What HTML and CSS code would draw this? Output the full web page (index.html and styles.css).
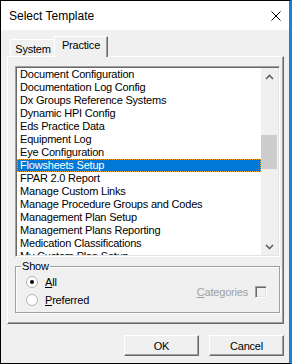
FILE: index.html
```html
<!DOCTYPE html>
<html lang="en">
<head>
  <meta charset="UTF-8" />
  <title>Select Template</title>
  <link rel="stylesheet" href="styles.css">
</head>
<body>
  <div class="window">
    <div class="titlebar">
      <span class="title">Select Template</span>
      <svg class="close" width="10" height="10" viewBox="0 0 10 10">
        <path d="M0.5 0.5 L9.5 9.5 M9.5 0.5 L0.5 9.5" stroke="#000" stroke-width="1" fill="none"/>
      </svg>
    </div>

    <div class="client">
      <div class="tabs">
        <div class="tab">System</div>
        <div class="tab active">Practice</div>
      </div>

      <div class="panel">
        <div class="listbox">
          <ul class="items">
            <li>Document Configuration</li>
            <li>Documentation Log Config</li>
            <li>Dx Groups Reference Systems</li>
            <li>Dynamic HPI Config</li>
            <li>Eds Practice Data</li>
            <li>Equipment Log</li>
            <li>Eye Configuration</li>
            <li class="selected">Flowsheets Setup</li>
            <li>FPAR 2.0 Report</li>
            <li>Manage Custom Links</li>
            <li>Manage Procedure Groups and Codes</li>
            <li>Management Plan Setup</li>
            <li>Management Plans Reporting</li>
            <li>Medication Classifications</li>
            <li>My Custom Plan Setup</li>
          </ul>
          <div class="scrollbar">
            <div class="arrow">
              <svg width="9" height="6" viewBox="0 0 9 6"><path d="M1 5 L4.5 1.5 L8 5" stroke="#606060" stroke-width="1.6" fill="none"/></svg>
            </div>
            <div class="track"><div class="thumb"></div></div>
            <div class="arrow">
              <svg width="9" height="6" viewBox="0 0 9 6"><path d="M1 1 L4.5 4.5 L8 1" stroke="#606060" stroke-width="1.6" fill="none"/></svg>
            </div>
          </div>
        </div>

        <fieldset class="group">
          <legend>Show</legend>
          <div class="group-body">
            <div class="radios">
              <label class="radio"><span class="circle checked"></span><span><u>A</u>ll</span></label>
              <label class="radio"><span class="circle"></span><span><u>P</u>referred</span></label>
            </div>
            <label class="check"><span><u>C</u>ategories</span><span class="box"></span></label>
          </div>
        </fieldset>
      </div>

      <div class="buttons">
        <button type="button">OK</button>
        <button type="button">Cancel</button>
      </div>
    </div>
  </div>
</body>
</html>
```

FILE: styles.css
```css
body {
  margin: 0;
  background: #f0f0f0;
  font-family: 'Liberation Sans', Arial, sans-serif;
  font-size: 11px;
  letter-spacing: -0.2px;
  color: #000;
}
.window {
  width: 292px;
  height: 364px;
  box-sizing: border-box;
  border: 1px solid #000;
  border-right: 3px solid #1883d7;
  background: #f0f0f0;
  display: flex;
  flex-direction: column;
}
.titlebar {
  height: 29px;
  background: #fff;
  display: flex;
  align-items: center;
  justify-content: space-between;
  padding: 0 8px 0 8px;
}
.title {
  font-size: 12px;
  letter-spacing: 0;
  margin-top: 1px;
}
.client {
  flex: 1;
  padding: 6px 5px 0 6px;
}
.tabs {
  height: 20px;
  display: flex;
  align-items: flex-end;
  padding-left: 3px;
}
.tab {
  height: 17px;
  box-sizing: border-box;
  width: 46px;
  border-top: 1px solid #fff;
  border-left: 1px solid #fff;
  border-right: 1px solid #696969;
  box-shadow: inset -1px 0 #a0a0a0;
  text-align: center;
  line-height: 16px;
  padding-top: 1px;
}
.tab.active {
  height: 21px;
  width: 54px;
  margin-left: -2px;
  margin-bottom: -1px;
  position: relative;
  z-index: 1;
  background: #f0f0f0;
  line-height: 15px;
}
.panel {
  height: 268px;
  box-sizing: border-box;
  width: 277px;
  border-top: 1px solid #fff;
  border-left: 1px solid #fff;
  border-right: 1px solid #696969;
  border-bottom: 1px solid #696969;
  box-shadow: inset -1px -1px #a0a0a0;
  padding: 9px 0 0 7px;
}
.listbox {
  width: 265px;
  height: 191px;
  box-sizing: border-box;
  border-top: 1px solid #a0a0a0;
  border-left: 1px solid #a0a0a0;
  border-right: 1px solid #fff;
  border-bottom: 1px solid #fff;
  box-shadow: inset 1px 1px #696969, inset -1px -1px #e3e3e3;
  padding: 1px;
  background: #fff;
  display: flex;
}
.items {
  list-style: none;
  margin: 0;
  padding: 0;
  flex: 1;
  overflow: hidden;
}
.items li {
  height: 13px;
  line-height: 13px;
  padding-left: 3px;
  white-space: nowrap;
}
.items li.selected {
  background: #0078d7;
  color: #fff;
  outline: 1px dotted #f5a623;
  outline-offset: -1px;
}
.scrollbar {
  width: 17px;
  background: #f0f0f0;
  display: flex;
  flex-direction: column;
}
.arrow {
  height: 17px;
  display: flex;
  align-items: center;
  justify-content: center;
}
.track {
  flex: 1;
}
.thumb {
  margin: 50px 1px 0 0;
  height: 34px;
  background: #cdcdcd;
}
.group {
  margin: 3px 0 0 0;
  padding: 0;
  width: 265px;
  height: 53px;
  box-sizing: border-box;
  border: 1px solid #a0a0a0;
  box-shadow: inset 1px 1px #fff, 1px 1px #fff;
}
.group legend {
  padding: 0 1px;
  margin-left: 5px;
  line-height: 13px;
}
.group-body {
  display: flex;
  justify-content: space-between;
  align-items: center;
  padding: 0 12px 0 10px;
}
.radios {
  display: flex;
  flex-direction: column;
}
.radio {
  height: 18px;
  display: flex;
  align-items: center;
  gap: 7px;
}
.circle {
  width: 10px;
  height: 10px;
  border-radius: 50%;
  border: 1px solid #b4b4b4;
  background: #fff;
  display: flex;
  align-items: center;
  justify-content: center;
}
.circle.checked::after {
  content: "";
  width: 4px;
  height: 4px;
  border-radius: 50%;
  background: #000;
}
.check {
  display: flex;
  align-items: center;
  gap: 7px;
  color: #a0a0a0;
  margin-top: 1px;
}
.box {
  width: 12px;
  height: 12px;
  box-sizing: border-box;
  border-top: 1px solid #a0a0a0;
  border-left: 1px solid #a0a0a0;
  border-right: 1px solid #fff;
  border-bottom: 1px solid #fff;
  box-shadow: inset 1px 1px #696969, inset -1px -1px #e3e3e3;
  background: #f0f0f0;
}
.buttons {
  display: flex;
  justify-content: flex-end;
  gap: 10px;
  margin-top: 11px;
  width: 277px;
}
button {
  width: 75px;
  height: 21px;
  box-sizing: border-box;
  font-family: 'Liberation Sans', Arial, sans-serif;
  font-size: 11px;
  letter-spacing: -0.2px;
  color: #000;
  background: #f0f0f0;
  border-top: 1px solid #fff;
  border-left: 1px solid #fff;
  border-right: 1px solid #696969;
  border-bottom: 1px solid #696969;
  box-shadow: inset -1px -1px #a0a0a0;
  padding: 0;
}
```
